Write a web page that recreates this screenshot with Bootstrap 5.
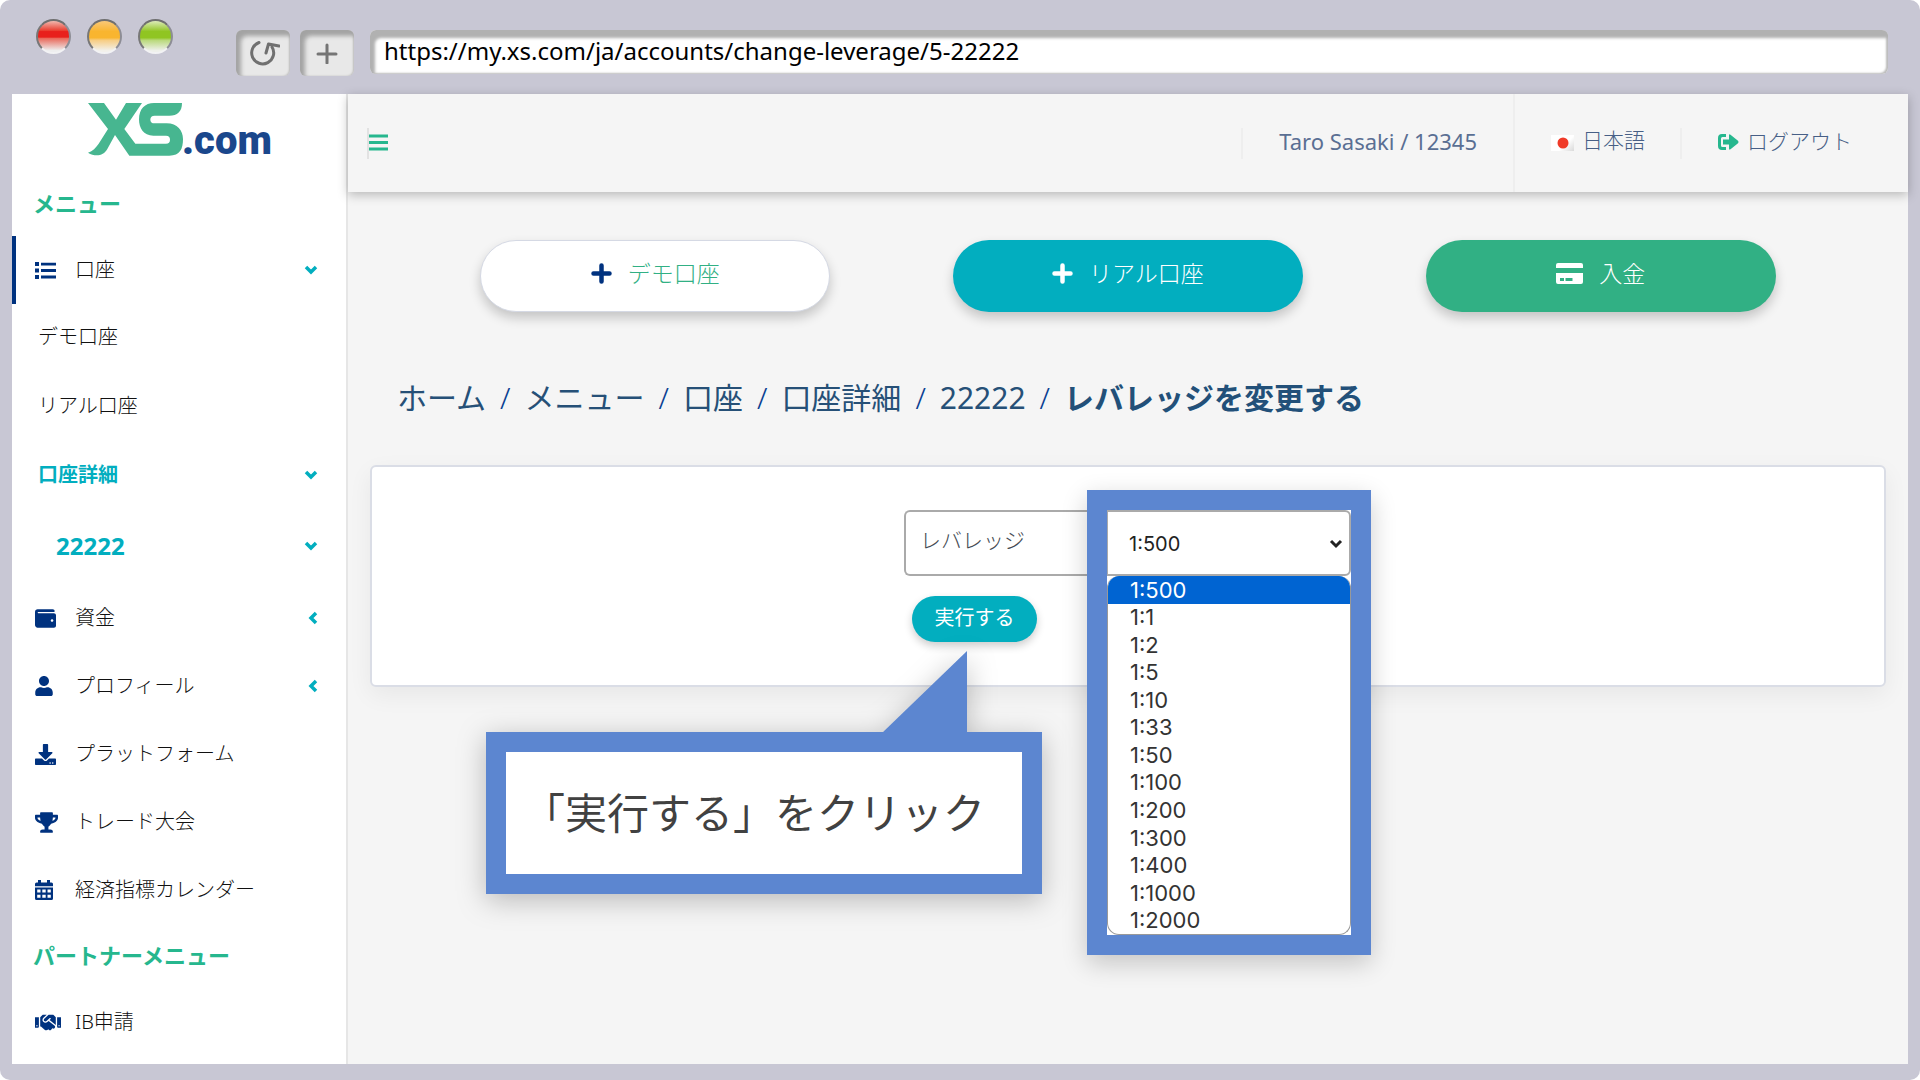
<!DOCTYPE html>
<html lang="ja">
<head>
<meta charset="utf-8">
<meta name="viewport" content="width=device-width, initial-scale=1">
<title>XS.com レバレッジを変更する</title>
<link href="https://cdn.jsdelivr.net/npm/bootstrap@5.3.0/dist/css/bootstrap.min.css" rel="stylesheet">
<style>
:root{--green:#26b78e;--teal:#02aebf;--navy:#00327f;--frame:#c8c7d4;--guide:#5c86d0;--panel:#f5f5f5}
body{font-family:"Noto Sans","Noto Sans CJK JP",sans-serif;font-size:20px;color:#222;background:#fff}
a{text-decoration:none}
.window{background:var(--frame);border-radius:10px;padding:0 12px 16px;overflow:hidden}
/* window chrome */
.chrome{height:94px;padding:0 20px 0 24px}
.lights{gap:16px;height:72px}
.light{width:35px;height:35px;border-radius:50%;border:2px solid;border-color:#6f6f6f #8d8d95 #f2f2f4 #777}
.light-red{background:linear-gradient(#f0b8ae,#e93a2c 32%,#e8201c 34%,#e8201c 52%,#e9695b 56%,#eee 95%)}
.light-amber{background:linear-gradient(#f9c878,#f9b52f 34%,#f9b52f 54%,#f7cd83 62%,#f2f0ea 95%)}
.light-green{background:linear-gradient(#dcebb8,#90c522 34%,#90c522 54%,#b9d97b 62%,#eef0ea 95%)}
.toolbar{gap:10px;padding:30px 0 0 63px}
.chrome-btn{width:54px;height:46px;border:0;border-radius:6px;background:#e8e8e8;box-shadow:inset 5px 6px 4px #a3a3a3,inset -1px 0 2px #bbb}
.url-box{height:44px;border:0;border-radius:6px;background:#fff;box-shadow:inset 5px 8px 3px #b1b1b1,inset -2px -1px 2px #bbb;margin-left:6px;padding:0 14px 3px;font-size:24px;color:#000}
/* sidebar */
.view{min-height:970px;background:var(--panel)}
.side{width:336px;background:#fff;border-right:2px solid #e6e6e6}
.brand{height:78px;padding-left:76px;padding-top:9px}
.brand-text{font:900 40px/44px Roboto,sans-serif;color:#1a478c;margin-left:-2px}
.side-title{height:64px;padding:0 0 2px 21px;font-size:22px;font-weight:700;color:var(--green)}
.side-link{height:68px;padding:0 28px 0 23px;color:#111;font-size:20px;font-weight:300}
.side-link .glyph{width:40px;color:var(--navy)}
.side-link .arrow{color:var(--teal)}
.side-link.current{box-shadow:inset 4px 0 var(--navy)}
.side-sub{height:69px;padding-left:26px;padding-bottom:4px}
.side-open{color:var(--teal);font-weight:700}
.side-account{height:73px;padding-left:44px;padding-bottom:4px;font-size:24px;font-weight:700;color:var(--teal)}
/* top bar */
.topbar{height:98px;box-shadow:0 3px 10px rgba(0,0,0,.25);color:#475f86;font-size:21px;font-weight:300}
.topbar a{color:#475f86}
.top-item{padding:0 36px 2px;height:31px;border-left:2px solid #eee}
.top-user{font-size:22px;font-weight:400;color:#5a6f93;padding-bottom:4px}
.top-tall{height:98px;padding-right:35px;padding-bottom:4px}
.flag{width:23px;height:16px;background:linear-gradient(135deg,#fff 60%,#d9d9d9)}
.nav-toggle{border:0;border-left:2px solid #e2e2e2;background:none;height:31px;padding:0 0 2px;margin-left:19px;color:var(--green)}
/* content */
.content{padding:48px 22px 0}
.actions{padding:0 49px;margin-bottom:68px}
.pill{width:350px;height:72px;border-radius:36px;font-size:23px;font-weight:300;padding-bottom:12px;box-shadow:0 6px 12px rgba(0,0,0,.2)}
.pill-demo{background:#fff;border:1px solid #d5d9e4;color:#31b084}
.pill-real,.pill-real:hover{background:var(--teal);color:#fff}
.pill-deposit,.pill-deposit:hover{background:#31b084;color:#fff}
.crumbs{font-size:30px;line-height:36px;padding-left:27px;margin-bottom:49px;--bs-breadcrumb-divider:"/";--bs-breadcrumb-item-padding-x:14px;--bs-breadcrumb-divider-color:#0a3f92}
.crumbs .breadcrumb-item::before{font-weight:300}
.crumbs a{color:#265077}
.crumbs .active{color:#225079;font-weight:700}
.panel{min-height:221px;background:#fff;border:2px solid #dadde6;border-radius:6px;padding:43px 0;box-shadow:0 8px 24px rgba(0,0,0,.06)}
.lever{width:448px}
.lever-row{height:66px}
.lever-label{flex:0 0 203px;background:#fff;border:2px solid #aaa;border-right:0;border-radius:6px 0 0 6px;color:#444a52;font-size:21px;font-weight:300;padding:0 14px 4px}
.lever-select{height:66px;font:20px Inter,sans-serif;color:#222;border:2px solid #aaa;border-left-width:1px;border-radius:0 6px 6px 0;padding:2px 40px 0 21px;background-position:right 5px center;background-size:16px 16px;background-image:url("data:image/svg+xml,%3Csvg xmlns='http://www.w3.org/2000/svg' viewBox='0 0 16 16'%3E%3Cpath fill='none' stroke='%23222' stroke-width='3' d='M3 6l5 5 5-5'/%3E%3C/svg%3E")}
.submit,.submit:hover{width:125px;height:46px;margin:20px 0 0 8px;border-radius:23px;background:var(--teal);color:#fff;font-size:20px;padding:0 0 2px;box-shadow:0 4px 8px rgba(0,0,0,.2)}
/* guide overlays */
.focus-frame{left:183px;top:-20px;width:284px;border:20px solid var(--guide);background:#fff;box-shadow:0 8px 24px rgba(0,0,0,.2)}
.focus-frame .lever-select{width:100%}
.choices{height:359px;border:1px solid #999;border-top:0;border-radius:12px;overflow:hidden;font:22px Inter,sans-serif;color:#333}
.choices li{flex:1 1 0;padding-left:22px;line-height:1}
.choices .picked{background:#0064d2;color:#fff}
.callout-box{left:-418px;top:222px;width:556px;height:162px;border:20px solid var(--guide);background:#fff;color:#414141;font-size:42px;padding:0 20px 2px 0;filter:drop-shadow(0 6px 14px rgba(0,0,0,.25))}
.callout-tail{right:55px;top:-101px}
</style>
<script src="https://cdn.jsdelivr.net/npm/bootstrap@5.3.0/dist/js/bootstrap.bundle.min.js"></script>
</head>
<body>
<div class="window">
  <div class="chrome d-flex">
    <div class="lights d-flex align-items-center">
      <span class="light light-red"></span><span class="light light-amber"></span><span class="light light-green"></span>
    </div>
    <div class="toolbar d-flex flex-grow-1 align-items-start">
      <button type="button" class="chrome-btn d-flex align-items-center justify-content-center" aria-label="Reload">
        <svg width="33" height="28" viewBox="0 0 33 28" fill="none" stroke="#707070" stroke-width="3" stroke-linecap="round" stroke-linejoin="round"><path d="M12 3.500A11 11 0 1 0 25 8"/><path d="M19 14L21.500 5L32 7"/></svg>
      </button>
      <button type="button" class="chrome-btn d-flex align-items-center justify-content-center" aria-label="New tab">
        <svg width="22" height="22" viewBox="0 0 22 22" stroke="#757575" stroke-width="3" stroke-linecap="round"><path d="M2 12h18M11 3v18"/></svg>
      </button>
      <input class="url-box flex-grow-1" type="text" aria-label="URL" value="https://my.xs.com/ja/accounts/change-leverage/5-22222">
    </div>
  </div>

  <div class="view d-flex">
    <aside class="side flex-shrink-0">
      <a href="#" class="brand d-flex align-items-start" aria-label="XS.com">
        <svg width="96" height="53" viewBox="204 292 288 159" fill="#47b690"><path d="M204 292H252L288 342L318 292H366L313 370L346 414H438Q450 414 450 402Q450 390 438 390H400C370 390 357 368 357 341C357 310 375 292 402 292H486C486 318 472 330 448 330H404Q391 330 391 342Q391 353 404 353H440C472 353 489 375 489 400C489 430 480 450 448 450H328L285 388L262 430C250 452 225 454 204 441C218 436 228 426 236 414L264 370Z"/></svg>
        <span class="brand-text pt-3">.com</span>
      </a>
      <div class="side-title d-flex align-items-center">メニュー</div>
      <nav class="d-flex flex-column">
        <a href="#" class="side-link current d-flex align-items-center"><span class="glyph d-flex"><svg width="21" height="17" viewBox="0 0 21 17" fill="currentColor"><path d="M0 0h4v4H0zM0 6.500h4v4H0zM0 13h4v4H0zM6 .7h15v2.800H6zM6 7.100h15v2.800H6zM6 13.600h15v2.800H6z"/></svg></span><span class="flex-grow-1">口座</span><svg class="arrow" width="14" height="10" viewBox="0 0 14 10" fill="none" stroke="currentColor" stroke-width="3.500"><path d="M2 2l5 5 5-5"/></svg></a>
        <a href="#" class="side-link side-sub d-flex align-items-center">デモ口座</a>
        <a href="#" class="side-link side-sub d-flex align-items-center">リアル口座</a>
        <a href="#" class="side-link side-sub side-open d-flex align-items-center"><span class="flex-grow-1">口座詳細</span><svg class="arrow" width="14" height="10" viewBox="0 0 14 10" fill="none" stroke="currentColor" stroke-width="3.500"><path d="M2 2l5 5 5-5"/></svg></a>
        <a href="#" class="side-link side-account d-flex align-items-center"><span class="flex-grow-1">22222</span><svg class="arrow" width="14" height="10" viewBox="0 0 14 10" fill="none" stroke="currentColor" stroke-width="3.500"><path d="M2 2l5 5 5-5"/></svg></a>
        <a href="#" class="side-link d-flex align-items-center"><span class="glyph d-flex"><svg width="21" height="21" viewBox="0 0 512 512" fill="currentColor"><path d="M461.200 128H80c-8.840 0-16-7.160-16-16s7.160-16 16-16h384c8.840 0 16-7.160 16-16 0-26.510-21.490-48-48-48H64C28.650 32 0 60.650 0 96v320c0 35.350 28.650 64 64 64h397.200c28.020 0 50.800-21.530 50.800-48V176c0-26.470-22.780-48-50.800-48zM416 336c-17.670 0-32-14.330-32-32s14.330-32 32-32 32 14.330 32 32-14.330 32-32 32z"/></svg></span><span class="flex-grow-1">資金</span><svg class="arrow" width="10" height="14" viewBox="0 0 10 14" fill="none" stroke="currentColor" stroke-width="3.500"><path d="M8 2L3 7l5 5"/></svg></a>
        <a href="#" class="side-link d-flex align-items-center"><span class="glyph d-flex"><svg width="18" height="20" viewBox="0 0 448 512" fill="currentColor"><path d="M224 256c70.700 0 128-57.300 128-128S294.700 0 224 0 96 57.300 96 128s57.300 128 128 128zm89.600 32h-16.700c-22.200 10.200-46.900 16-72.900 16s-50.600-5.800-72.900-16h-16.700C60.200 288 0 348.200 0 422.400V464c0 26.500 21.500 48 48 48h352c26.500 0 48-21.500 48-48v-41.600c0-74.200-60.200-134.400-134.400-134.400z"/></svg></span><span class="flex-grow-1">プロフィール</span><svg class="arrow" width="10" height="14" viewBox="0 0 10 14" fill="none" stroke="currentColor" stroke-width="3.500"><path d="M8 2L3 7l5 5"/></svg></a>
        <a href="#" class="side-link d-flex align-items-center"><span class="glyph d-flex"><svg width="21" height="21" viewBox="0 0 512 512" fill="currentColor"><path d="M216 0h80c13.300 0 24 10.700 24 24v168h87.700c17.800 0 26.700 21.500 14.100 34.100L269.700 378.300c-7.500 7.500-19.800 7.500-27.300 0L90.100 226.100c-12.600-12.600-3.700-34.100 14.100-34.100H192V24c0-13.300 10.700-24 24-24zm296 376v112c0 13.300-10.700 24-24 24H24c-13.300 0-24-10.700-24-24V376c0-13.300 10.700-24 24-24h146.700l49 49c20.100 20.100 52.500 20.100 72.600 0l49-49H488c13.300 0 24 10.700 24 24zm-124 88c0-11-9-20-20-20s-20 9-20 20 9 20 20 20 20-9 20-20zm64 0c0-11-9-20-20-20s-20 9-20 20 9 20 20 20 20-9 20-20z"/></svg></span>プラットフォーム</a>
        <a href="#" class="side-link d-flex align-items-center"><span class="glyph d-flex"><svg width="23" height="21" viewBox="0 0 576 512" fill="currentColor"><path d="M552 64H448V24c0-13.300-10.700-24-24-24H152c-13.300 0-24 10.700-24 24v40H24C10.700 64 0 74.700 0 88v56c0 35.700 22.500 72.400 61.900 100.700 31.500 22.700 69.800 37.100 110 41.700C203.300 338.500 240 360 240 360v72h-48c-35.300 0-64 20.700-64 56v12c0 6.600 5.400 12 12 12h296c6.600 0 12-5.400 12-12v-12c0-35.300-28.700-56-64-56h-48v-72s36.700-21.500 68.100-73.600c40.300-4.600 78.600-19 110-41.700 39.300-28.300 61.900-65 61.900-100.700V88c0-13.300-10.700-24-24-24zM99.300 192.800C74.900 175.200 64 155.600 64 144v-16h64.200c1 32.600 5.800 61.200 12.800 86.200-15.100-5.200-29.200-12.400-41.700-21.400zM512 144c0 16.100-17.700 36.100-35.300 48.800-12.500 9-26.700 16.200-41.800 21.400 7-25 11.800-53.600 12.800-86.200H512v16z"/></svg></span>トレード大会</a>
        <a href="#" class="side-link d-flex align-items-center"><span class="glyph d-flex"><svg width="18" height="20" viewBox="0 0 18 20" fill="currentColor" fill-rule="evenodd"><path d="M3 0h3v2.500h6V0h3v2.500h1.500Q18 2.500 18 4v2.200H0V4Q0 2.500 1.500 2.500H3zM0 7.500h18V18.500Q18 20 16.500 20h-15Q0 20 0 18.500zM2.200 9.500v3h3.300v-3zM7.300 9.500v3h3.400v-3zM12.500 9.500v3h3.300v-3zM2.200 14.700v3h3.300v-3zM7.300 14.700v3h3.400v-3zM12.500 14.700v3h3.300v-3z"/></svg></span>経済指標カレンダー</a>
      </nav>
      <div class="side-title d-flex align-items-center">パートナーメニュー</div>
      <nav>
        <a href="#" class="side-link d-flex align-items-center"><span class="glyph d-flex"><svg width="26" height="21" viewBox="0 0 640 512" fill="currentColor"><path d="M434.700 64h-85.900c-8 0-15.700 3-21.600 8.400l-98.300 90c-.1.1-.2.3-.3.4-16.600 15.600-16.300 40.500-2.100 56 12.700 13.900 39.400 17.600 56.100 2.700.1-.1.3-.1.4-.2l79.900-73.200c6.500-5.900 16.700-5.500 22.600 1 6 6.500 5.500 16.600-1 22.600l-26.100 23.900L504 313.800c2.900 2.400 5.500 5 7.900 7.700V128l-54.600-54.600c-5.900-6-14.100-9.400-22.600-9.400zM544 128.200v223.900c0 17.700 14.300 32 32 32h64V128.200h-96zm48 223.900c-8.800 0-16-7.200-16-16s7.200-16 16-16 16 7.200 16 16-7.200 16-16 16zM0 384h64c17.700 0 32-14.300 32-32V128.200H0V384zm48-63.900c8.800 0 16 7.200 16 16s-7.200 16-16 16-16-7.200-16-16c0-8.900 7.200-16 16-16zm435.900 18.600L334.600 217.500l-30 27.500c-29.700 27.100-75.200 24.500-101.700-4.400-26.900-29.400-24.800-74.900 4.400-101.700L289.100 64h-83.800c-8.500 0-16.600 3.400-22.600 9.400L128 128v223.900h18.300l90.500 81.900c27.400 22.300 67.700 18.100 90-9.300l.2-.2 17.900 15.500c15.900 13 39.400 10.500 52.300-5.400l31.400-38.600 5.400 4.400c13.700 11.100 33.900 9.100 45-4.700l9.500-11.700c11.200-13.800 9.100-33.900-4.600-45.100z"/></svg></span>IB申請</a>
      </nav>
    </aside>

    <div class="flex-grow-1">
      <header class="topbar d-flex align-items-center">
        <button type="button" class="nav-toggle d-flex align-items-center me-auto" aria-label="Menu"><svg width="19" height="17" viewBox="0 0 19 17" stroke="currentColor" stroke-width="3"><path d="M0 2h19M0 8.500h19M0 15h19"/></svg></button>
        <span class="top-item top-user d-flex align-items-center">Taro Sasaki / 12345</span>
        <a href="#" class="top-item top-tall d-flex align-items-center gap-2"><span class="flag d-flex align-items-center justify-content-center mt-1"><svg width="12" height="12" viewBox="0 0 12 12"><circle cx="6" cy="6" r="5.500" fill="#f03a28"/></svg></span>日本語</a>
        <a href="#" class="top-item d-flex align-items-center gap-2 pe-5 me-2"><svg width="21" height="16" viewBox="0 0 21 16" fill="#26b78e"><path d="M8 0H4Q0 0 0 4v8q0 4 4 4h4v-3H4.500Q3 13 3 11.500v-7Q3 3 4.500 3H8z"/><path d="M5 5.500h6V1.500q0-2 1.500-.8l7.500 6q1 1.300 0 2.500l-7.500 6Q11 16.400 11 14.500V10.500H5z"/></svg>ログアウト</a>
      </header>

      <main class="content">
        <div class="actions">
          <div class="row g-0">
            <div class="col-4 d-flex justify-content-center"><a href="#" class="btn pill pill-demo d-flex align-items-center justify-content-center gap-3"><svg width="21" height="21" viewBox="0 0 21 21" stroke="#00327f" stroke-width="4.500" stroke-linecap="round"><path d="M2.500 10.500h16M10.500 2.500v16"/></svg>デモ口座</a></div>
            <div class="col-4 d-flex justify-content-center"><a href="#" class="btn pill pill-real d-flex align-items-center justify-content-center gap-3"><svg width="21" height="21" viewBox="0 0 21 21" stroke="#fff" stroke-width="4.500" stroke-linecap="round"><path d="M2.500 10.500h16M10.500 2.500v16"/></svg>リアル口座</a></div>
            <div class="col-4 d-flex justify-content-center"><a href="#" class="btn pill pill-deposit d-flex align-items-center justify-content-center gap-3"><svg width="27" height="21" viewBox="0 0 27 21" fill="#fff" fill-rule="evenodd"><path d="M0 5V2Q0 0 2 0h23q2 0 2 2v3zM0 10h27v9q0 2-2 2H2q-2 0-2-2zM4 15v3h4v-3zM9.500 15v3h7v-3z"/></svg>入金</a></div>
          </div>
        </div>

        <nav aria-label="breadcrumb">
          <ol class="breadcrumb crumbs">
            <li class="breadcrumb-item"><a href="#">ホーム</a></li>
            <li class="breadcrumb-item"><a href="#">メニュー</a></li>
            <li class="breadcrumb-item"><a href="#">口座</a></li>
            <li class="breadcrumb-item"><a href="#">口座詳細</a></li>
            <li class="breadcrumb-item"><a href="#">22222</a></li>
            <li class="breadcrumb-item active" aria-current="page">レバレッジを変更する</li>
          </ol>
        </nav>

        <section class="panel">
          <form class="lever position-relative mx-auto">
            <div class="lever-row d-flex">
              <label class="lever-label d-flex align-items-center" for="leverage">レバレッジ</label>
            </div>
            <button type="button" class="btn submit d-flex align-items-center justify-content-center">実行する</button>

            <div class="focus-frame position-absolute">
              <select class="form-select lever-select" id="leverage"><option selected>1:500</option></select>
              <ul class="choices list-unstyled d-flex flex-column mb-0">
                <li class="picked d-flex align-items-center">1:500</li>
                <li class="d-flex align-items-center">1:1</li>
                <li class="d-flex align-items-center">1:2</li>
                <li class="d-flex align-items-center">1:5</li>
                <li class="d-flex align-items-center">1:10</li>
                <li class="d-flex align-items-center">1:33</li>
                <li class="d-flex align-items-center">1:50</li>
                <li class="d-flex align-items-center">1:100</li>
                <li class="d-flex align-items-center">1:200</li>
                <li class="d-flex align-items-center">1:300</li>
                <li class="d-flex align-items-center">1:400</li>
                <li class="d-flex align-items-center">1:1000</li>
                <li class="d-flex align-items-center">1:2000</li>
              </ul>
            </div>
            <div class="callout-box position-absolute d-flex align-items-center justify-content-center">
              <svg class="callout-tail position-absolute" width="85" height="82" viewBox="0 0 85 82" fill="#5c86d0"><path d="M85 0V82H0z"/></svg>
              <span>「実行する」をクリック</span>
            </div>
          </form>
        </section>
      </main>
    </div>
  </div>
</div>
</body>
</html>
